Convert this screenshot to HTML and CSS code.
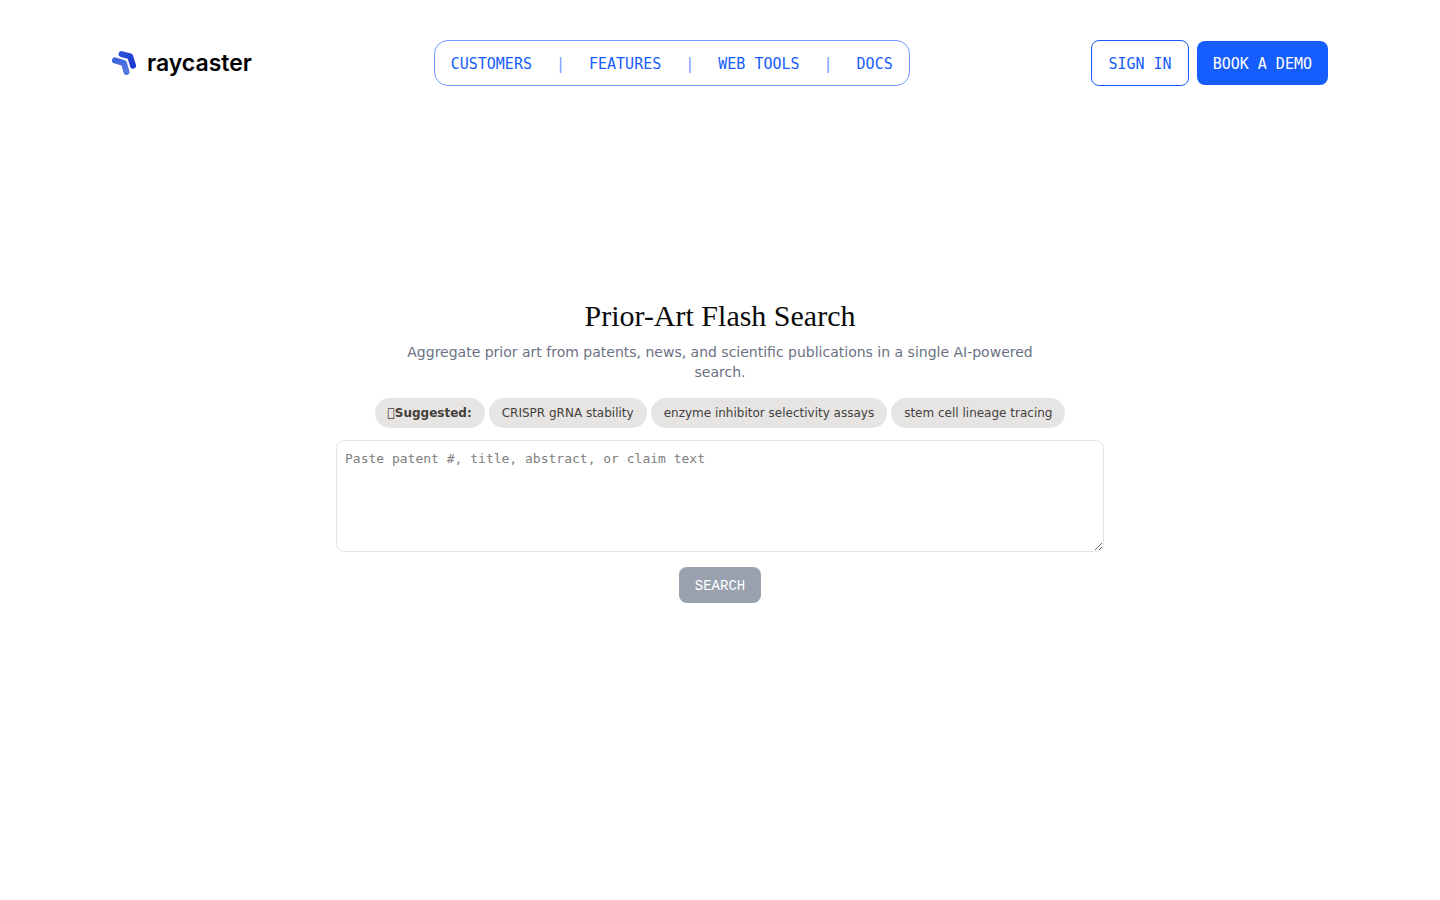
FILE: index.html
```html
<!DOCTYPE html>
<html lang="en">
<head>
  <meta charset="UTF-8" />
  <meta name="viewport" content="width=device-width, initial-scale=1" />
  <title>Prior-Art Flash Search | Raycaster</title>
  <link rel="stylesheet" href="styles.css">
</head>
<body>
  <header class="header">
    <a href="#" class="logo">
      <svg class="logo-mark" viewBox="0 0 24 24" aria-hidden="true">
        <defs>
          <linearGradient id="back" x1="0" y1="0" x2="1" y2="1">
            <stop offset="0" stop-color="#2a4fd6" />
            <stop offset="1" stop-color="#1d38cf" />
          </linearGradient>
          <linearGradient id="front" x1="0" y1="0" x2="1" y2="1">
            <stop offset="0" stop-color="#3c66dc" />
            <stop offset="1" stop-color="#5576e2" />
          </linearGradient>
        </defs>
        <g fill="none" stroke-width="6" stroke-linecap="round" stroke-linejoin="round">
          <path stroke="url(#back)" d="M9.6 3.1 L18.2 5.4 L21 14.6" />
          <path stroke="url(#front)" d="M3 9.4 L11.9 12.1 L14.5 21" />
        </g>
      </svg>
      <span>raycaster</span>
    </a>

    <nav class="nav">
      <a href="#">CUSTOMERS</a>
      <span class="separator">|</span>
      <a href="#">FEATURES</a>
      <span class="separator">|</span>
      <a href="#">WEB TOOLS</a>
      <span class="separator">|</span>
      <a href="#">DOCS</a>
    </nav>

    <div class="actions">
      <a href="#" class="btn btn-outline">SIGN IN</a>
      <a href="#" class="btn btn-primary">BOOK A DEMO</a>
    </div>
  </header>

  <main class="main">
    <form class="search">
      <h1>Prior-Art Flash Search</h1>
      <p class="subtitle">Aggregate prior art from patents, news, and scientific publications in a single AI-powered search.</p>
      <div class="chips">
        <span class="chip chip-label">&#xE0F0;Suggested:</span>
        <button type="button" class="chip">CRISPR gRNA stability</button>
        <button type="button" class="chip">enzyme inhibitor selectivity assays</button>
        <button type="button" class="chip">stem cell lineage tracing</button>
      </div>
      <textarea class="query" aria-label="Search query" placeholder="Paste patent #, title, abstract, or claim text"></textarea>
      <button type="submit" class="submit" disabled>SEARCH</button>
    </form>
  </main>
</body>
</html>
```
FILE: styles.css
```css
* {
  box-sizing: border-box;
}
body {
  margin: 0;
  min-height: 100vh;
  display: flex;
  flex-direction: column;
  font-family: "DejaVu Sans", sans-serif;
  background: #fff;
}
a {
  text-decoration: none;
}
.header {
  display: flex;
  align-items: center;
  justify-content: space-between;
  padding: 40px 112px;
  font-family: "DejaVu Sans Mono", monospace;
  font-size: 15px;
  line-height: 24px;
}
.logo {
  display: flex;
  align-items: center;
  gap: 11px;
  color: #000;
  font-family: Inter, sans-serif;
  font-size: 23px;
  font-weight: 600;
}
.logo-mark {
  width: 24px;
  height: 24px;
}
.nav {
  display: flex;
  gap: 24px;
  padding: 11px 16px 9px;
  border: 1px solid #729bff;
  border-radius: 14px;
}
.nav a {
  color: #155dfc;
}
.separator {
  color: #729bff;
}
.actions {
  display: flex;
  align-items: center;
  gap: 8px;
}
.btn {
  padding: 11px 16px 9px;
  border-radius: 8px;
}
.btn-outline {
  border: 1px solid #155dfc;
  color: #155dfc;
}
.btn-primary {
  background: #155dfc;
  color: #fff;
}

/* bottom padding balances the header so the form sits mid-window */
.main {
  flex: 1;
  display: flex;
  align-items: center;
  justify-content: center;
  padding: 0 16px 126px;
}
.search {
  display: flex;
  flex-direction: column;
  align-items: center;
  width: 100%;
  max-width: 768px;
}
h1 {
  margin: 0 0 8px;
  color: #0a0a0a;
  font-family: "Liberation Serif", serif;
  font-size: 30px;
  font-weight: 400;
  line-height: 36px;
}
.subtitle {
  margin: 0 0 16px;
  max-width: 672px;
  color: #6a7282;
  font-size: 14px;
  line-height: 20px;
  text-align: center;
}
.chips {
  display: flex;
  flex-wrap: wrap;
  justify-content: center;
  gap: 4px;
  margin-bottom: 12px;
}
.chip {
  padding: 7px 13px;
  border: 0;
  border-radius: 15px;
  background: #e7e5e4;
  color: #44403b;
  font-family: inherit;
  font-size: 12px;
  line-height: 16px;
}
.chip-label {
  font-weight: 700;
}
.query {
  width: 100%;
  height: 112px;
  margin-bottom: 15px;
  padding: 8px;
  border: 1px solid #e5e5e5;
  border-radius: 8px;
  font-family: "DejaVu Sans Mono", monospace;
  font-size: 13px;
  line-height: 20px;
}
.query::placeholder {
  color: #808080;
}
.submit {
  padding: 9px 16px 7px;
  border: 0;
  border-radius: 8px;
  background: #99a1af;
  color: #fff;
  font-family: "Liberation Mono", monospace;
  font-size: 14px;
  line-height: 20px;
}
```
